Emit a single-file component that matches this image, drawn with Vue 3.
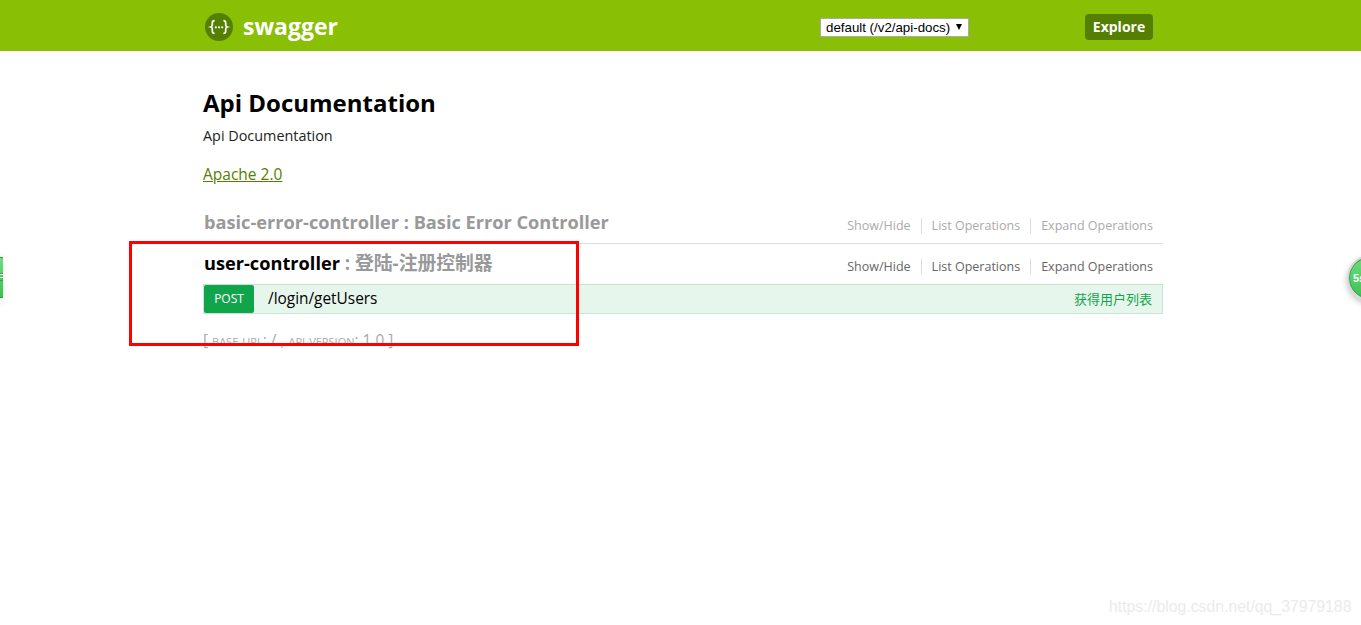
<script setup>
const ops = ['Show/Hide', 'List Operations', 'Expand Operations']
const resources = [
  { name: 'basic-error-controller', desc: ' : Basic Error Controller', dim: true },
  { name: 'user-controller', desc: ' : 登陆-注册控制器', dim: false }
]
</script>

<template>
  <div class="page">
    <header class="bar">
      <div class="bar-in">
        <div class="brand">
          <svg class="logo" width="28" height="28" viewBox="0 0 28 28">
            <circle cx="14" cy="14" r="14" fill="#547f00" />
            <path d="M9.600 7.600c-2 0-2.300 1-2.300 2.400v2c0 1-.5 1.700-1.500 2 1 .3 1.500 1 1.500 2v2c0 1.400.3 2.400 2.300 2.400M18.400 7.600c2 0 2.300 1 2.300 2.400v2c0 1 .5 1.700 1.500 2-1 .3-1.500 1-1.500 2v2c0 1.400-.3 2.400-2.300 2.400" fill="none" stroke="#fff" stroke-width="1.700" />
            <circle cx="10.800" cy="14.300" r="1.100" fill="#fff" />
            <circle cx="14" cy="14.300" r="1.100" fill="#fff" />
            <circle cx="17.200" cy="14.300" r="1.100" fill="#fff" />
          </svg>
          <span class="brand-name">swagger</span>
        </div>
        <div class="bar-right">
          <div class="select">
            <span>default (/v2/api-docs)</span>
            <i class="caret"></i>
          </div>
          <a class="explore">Explore</a>
        </div>
      </div>
    </header>

    <main class="content">
      <h1 class="title">Api Documentation</h1>
      <p class="sub">Api Documentation</p>
      <a class="license">Apache 2.0</a>

      <section v-for="r in resources" :key="r.name" class="res" :class="{ dim: r.dim }">
        <div class="res-head">
          <h2 class="res-title"><span class="res-name">{{ r.name }}</span><span class="res-desc">{{ r.desc }}</span></h2>
          <ul class="ops">
            <li v-for="o in ops" :key="o">{{ o }}</li>
          </ul>
        </div>
      </section>

      <div class="endpoint">
        <span class="method">POST</span>
        <span class="path">/login/getUsers</span>
        <span class="summary">获得用户列表</span>
      </div>

      <div class="base">[ <span class="sc">base url</span>: / , <span class="sc">api version</span>: 1.0 ]</div>
    </main>

    <div class="mark"></div>
    <div class="bubble left"></div>
    <div class="bubble right"><span>5s</span></div>
    <div class="watermark">https://blog.csdn.net/qq_37979188</div>
  </div>
</template>

<style scoped>
.page {
  position: relative;
  width: 1361px;
  height: 625px;
  overflow: hidden;
  background: #fff;
  font-family: "Open Sans", "Noto Sans CJK SC", sans-serif;
}
.bar { height: 51px; background: #89bf04; }
.bar-in {
  width: 950px;
  margin-left: 203px;
  height: 51px;
  display: flex;
  justify-content: space-between;
  align-items: center;
  padding-top: 3px;
  box-sizing: border-box;
}
.brand { display: flex; align-items: center; margin-left: 2px; }
.logo { display: block; }
.brand-name { margin-left: 10px; color: #fff; font-weight: 700; font-size: 23px; line-height: 26px; padding-bottom: 2px; }
.bar-right { display: flex; align-items: center; }
.select {
  width: 149px;
  height: 19px;
  box-sizing: border-box;
  border: 1px solid #aaa;
  background: #fff;
  color: #000;
  font: 13.300px/17px "Liberation Sans", sans-serif;
  padding-left: 5px;
  position: relative;
}
.caret {
  position: absolute;
  right: 6px;
  top: 5px;
  border-left: 3px solid transparent;
  border-right: 3px solid transparent;
  border-top: 6px solid #000;
}
.explore {
  margin-left: 116px;
  width: 68px;
  height: 26px;
  border-radius: 4px;
  background: #547f00;
  color: #fff;
  font-weight: 700;
  font-size: 14px;
  line-height: 26px;
  text-align: center;
}
.content { width: 960px; margin-left: 203px; }
.title { margin: 33px 0 0; font-size: 24px; font-weight: 700; line-height: 38px; color: #000; }
.sub { margin: 2px 0 0; font-size: 14.400px; line-height: 24px; color: #222; }
.license {
  display: block;
  margin-top: 14px;
  font-size: 15.500px;
  line-height: 24px;
  color: #547f00;
  text-decoration: underline;
}
.res { padding-left: 1px; }
.res-head { display: flex; justify-content: space-between; align-items: flex-end; height: 40px; }
.res:first-of-type .res-head { height: 49px; border-bottom: 1px solid #ddd; margin-left: -1px; padding-left: 1px; margin-top: 8px; }
.res-title { margin: 0; font-size: 18.200px; font-weight: 700; line-height: 26px; padding-bottom: 8px; }
.res-name { color: #000; }
.res-desc { color: #999; }
.res:not(.dim) .res-desc { font-size: 18.800px; }
.dim .res-name { color: #999; }
.ops { display: flex; list-style: none; margin: 0; padding: 0 0 9px; font-size: 12.500px; line-height: 16px; color: #666; }
.ops li { padding: 0 10px; border-right: 1px solid #ddd; }
.ops li:last-child { border-right: none; }
.dim .ops { color: #aaa; }
.endpoint {
  height: 30px;
  box-sizing: border-box;
  display: flex;
  align-items: center;
  background: #e7f6ec;
  border: 1px solid #c3e8d1;
}
.method {
  align-self: flex-start;
  width: 50px;
  height: 28px;
  border-radius: 2px;
  background: #10a54a;
  color: #fff;
  font-size: 12px;
  line-height: 28px;
  text-align: center;
}
.path { margin-left: 14px; padding-bottom: 2px; font-size: 15.400px; color: #000; }
.summary { margin-left: auto; margin-right: 10px; padding-bottom: 2px; font-size: 13px; color: #10a54a; }
.base { margin-top: 16px; font-size: 15.400px; line-height: 22px; color: #aaa; }
.sc { font-variant: small-caps; }
.mark {
  position: absolute;
  left: 129px;
  top: 241px;
  width: 450px;
  height: 105px;
  box-sizing: border-box;
  border: 3px solid #f00;
}
.bubble {
  position: absolute;
  box-sizing: border-box;
  color: #fff;
  font: 700 11px/42px "Liberation Sans", sans-serif;
}
.bubble.left {
  left: 0;
  top: 257px;
  width: 3px;
  height: 41px;
  background: linear-gradient(#6fdc82, #3cc14f);
  border-top: 1px solid #2f9a40;
  border-bottom: 1px solid #2f9a40;
  box-shadow: 0 -4px 4px -1px rgba(0, 0, 0, .15), 0 6px 6px rgba(0, 0, 0, .12);
}
.bubble.left::after {
  content: "";
  position: absolute;
  left: 0;
  top: 15px;
  width: 3px;
  height: 8px;
  background: linear-gradient(#3a9f4b 0 1px, #fff 1px 2px, #4dc862 2px 4px, #fff 4px 5px, #4dc862 5px 7px, #3a9f4b 7px 8px);
}
.bubble.right {
  left: 1347px;
  top: 255px;
  width: 46px;
  height: 46px;
  border-radius: 50%;
  border: 2px solid #d8d8d8;
  background: linear-gradient(#6fdc82, #3cc14f);
  box-shadow: 0 3px 6px rgba(0, 0, 0, .25), inset 0 0 0 1px #3a9f4b;
  padding-left: 4px;
}
.watermark {
  position: absolute;
  left: 1109px;
  top: 597px;
  font: 15.800px/20px "Liberation Sans", sans-serif;
  color: #ebebeb;
}
</style>
